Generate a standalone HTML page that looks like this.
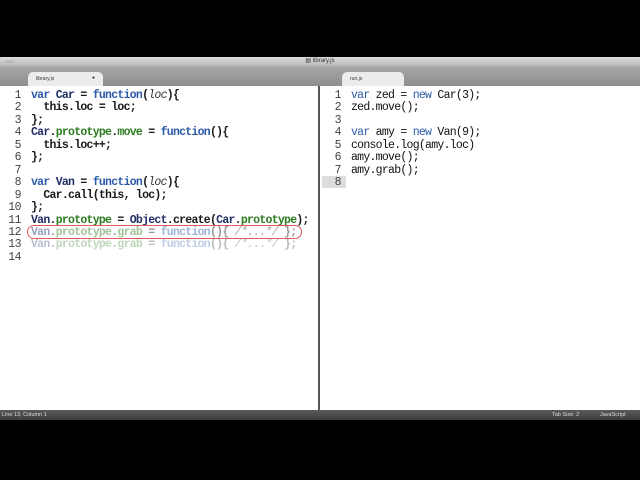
<!DOCTYPE html>
<html><head><meta charset="utf-8"><style>
*{margin:0;padding:0;box-sizing:border-box}
body{width:640px;height:480px;background:#000;position:relative;overflow:hidden;font-family:"Liberation Sans",sans-serif}
.title{position:absolute;left:0;top:57px;width:640px;height:9px;background:linear-gradient(#dcdcdc,#b8b8b8);font-size:6px;color:#333;text-align:center;line-height:9px}
.tabbar{position:absolute;left:0;top:66px;width:640px;height:20px;background:linear-gradient(#a8a8a8,#8e8e8e)}
.tab{position:absolute;top:6px;height:14px;background:#ececec;border-radius:5px 5px 0 0;font-size:5px;color:#333;padding:4px 0 0 8px}
.pane{position:absolute;top:86px;height:324px;background:#fff}
.code{position:absolute;top:90px;font-family:"Liberation Mono",monospace;font-size:11.5px;letter-spacing:-0.73px;line-height:12.45px;white-space:pre;color:#1a1a1a;font-weight:bold}
.ln{position:absolute;top:90px;font-family:"Liberation Mono",monospace;font-size:11.5px;letter-spacing:-0.5px;line-height:12.45px;white-space:pre;color:#444;text-align:right;width:18px}
.k{color:#2a5aa8}.o{color:#1f2f66}.p{color:#2d7a20}.i{font-style:italic;font-weight:normal;color:#333}
.f{opacity:.45}.f2{opacity:.3}
.status{position:absolute;left:0;top:410px;width:640px;height:10px;background:linear-gradient(#5a5a5a,#3c3c3c);font-size:5.5px;color:#ddd;line-height:10px}
</style></head><body>
<div class="title">▤ library.js</div>
<div class="tabbar">
<div class="tab" style="left:28px;width:75px">library.js<span style="position:absolute;right:8px;top:3px">●</span></div>
<div class="tab" style="left:342px;width:62px">run.js</div>
</div>
<div style="position:absolute;left:5px;top:59px;font-size:5px;color:#777">○○○</div>
<div class="pane" style="left:0;width:318px"></div>
<div class="pane" style="left:320px;width:320px"></div>
<div style="position:absolute;left:318px;top:86px;width:2px;height:324px;background:#555"></div>
<div class="ln" style="left:3px">1
2
3
4
5
6
7
8
9
10
11
12
13
14</div>
<div class="code" style="left:31px"><span class="k">var</span> <span class="o">Car</span> = <span class="k">function</span>(<span class="i">loc</span>){
  this.loc = loc;
};
<span class="o">Car</span>.<span class="p">prototype</span>.<span class="p">move</span> = <span class="k">function</span>(){
  this.loc++;
};

<span class="k">var</span> <span class="o">Van</span> = <span class="k">function</span>(<span class="i">loc</span>){
  Car.call(this, loc);
};
<span class="o">Van</span>.<span class="p">prototype</span> = <span class="o">Object</span>.create(<span class="o">Car</span>.<span class="p">prototype</span>);
<span class="f"><span class="o">Van</span>.<span class="p">prototype</span>.<span class="p">grab</span> = <span class="k">function</span>(){ <span class="i">/*...*/</span> };</span>
<span class="f2"><span class="o">Van</span>.<span class="p">prototype</span>.<span class="p">grab</span> = <span class="k">function</span>(){ <span class="i">/*...*/</span> };</span></div>
<div style="position:absolute;left:27px;top:225px;width:275px;height:14px;border:1px solid #e05a5a;border-radius:7px"></div>
<div style="position:absolute;left:322px;top:176px;width:24px;height:12px;background:#ddd"></div>
<div class="ln" style="left:323px">1
2
3
4
5
6
7
8</div>
<div class="code" style="left:351px;font-weight:normal;color:#111"><span class="k">var</span> zed = <span class="k">new</span> Car(3);
zed.move();

<span class="k">var</span> amy = <span class="k">new</span> Van(9);
console.log(amy.loc)
amy.move();
amy.grab();</div>
<div class="status"><span style="position:absolute;left:2px">Line 13, Column 1</span><span style="position:absolute;left:552px">Tab Size: 2</span><span style="position:absolute;left:600px">JavaScript</span></div>
</body></html>
